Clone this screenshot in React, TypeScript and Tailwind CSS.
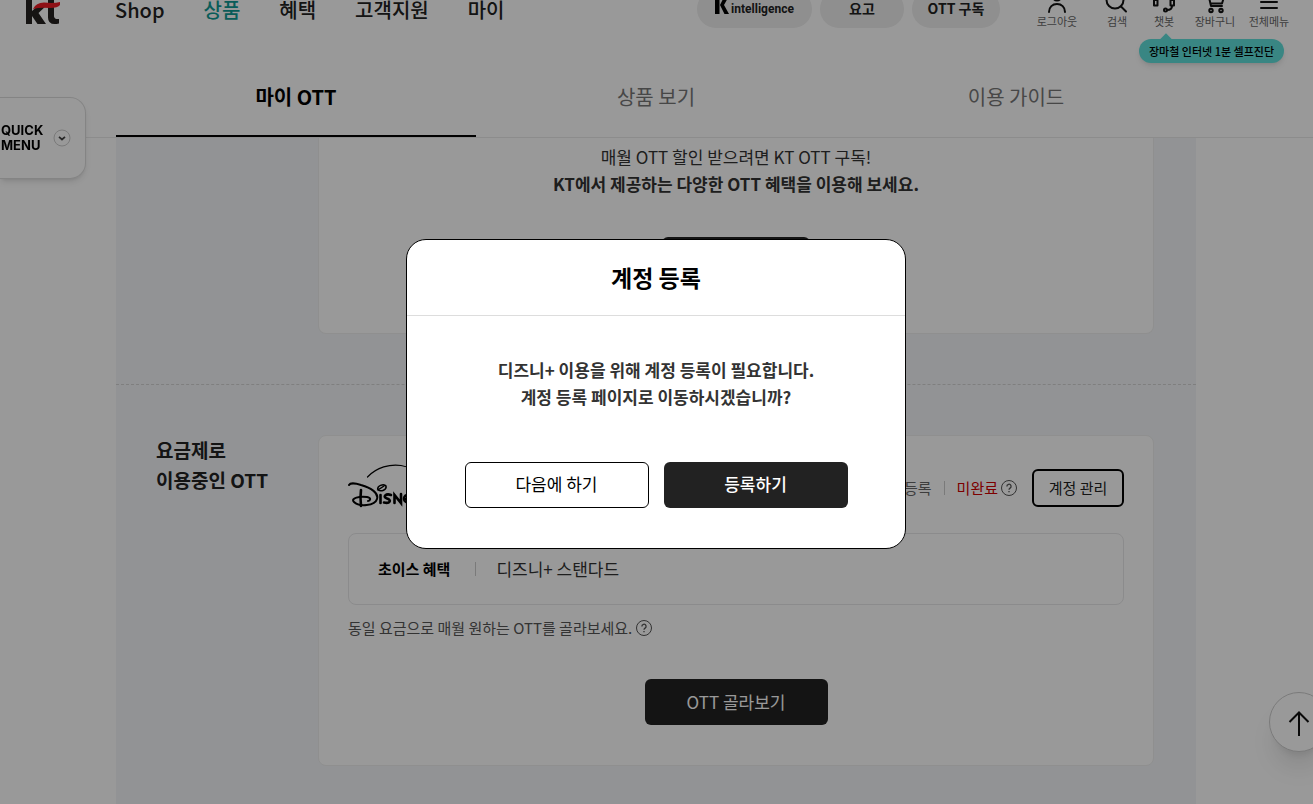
import type { ReactNode } from "react";

const navItems = ["Shop", "상품", "혜택", "고객지원", "마이"];
const tabs = ["마이 OTT", "상품 보기", "이용 가이드"];

function KtLogo() {
  return (
    <svg viewBox="0 0 36 40" className="h-10 w-9" role="img" aria-label="kt">
      <g fill="#252220">
        <path d="M0 4H6V26L14 19H22L12.500 28L20 39H11.500L6 31V39H0Z" />
        <path d="M22 15H28V31.500Q28.500 34.500 33 34V38.500Q22 41 22 32.500Z" />
      </g>
      <path d="M7 24Q10 17.500 18 17.500Q28 18.500 34 17V20Q32 23 24 23Q14 22 7 24Z" fill="#ee1c25" />
    </svg>
  );
}

function UtilIcon({ children }: { children: ReactNode }) {
  return (
    <svg
      viewBox="0 0 24 24"
      className="size-6"
      fill="none"
      stroke="#111"
      strokeWidth="2"
      strokeLinecap="round"
      strokeLinejoin="round"
      aria-hidden="true"
    >
      {children}
    </svg>
  );
}

function HelpIcon() {
  return (
    <svg viewBox="0 0 16 16" className="size-4" fill="none" stroke="#555" aria-hidden="true">
      <circle cx="8" cy="8" r="7.500" />
      <path d="M5.900 6.500a2.100 2.100 0 1 1 3.200 1.600c-.8.500-1.100.8-1.100 1.600M8 11v1.200" strokeWidth="1.300" />
    </svg>
  );
}

function DisneyLogo() {
  return (
    <svg viewBox="0 0 90 48" className="h-12 w-[90px]" fill="none" stroke="#000" strokeLinecap="round" role="img" aria-label="Disney+">
      <path d="M19.500 13C29 3 42 0 53 1.500S70 8 75 16" strokeWidth="1.200" />
      <path d="M1 21C2 19 7 19 13 21C23 24 31 29 29 35C27 42 11 43 6 38C2 34 12 32 19 33C24 34 22 37 20 37" strokeWidth="2" />
      <path d="M13 26Q12 33 13 42" strokeWidth="2.600" />
      <path d="M30 26C28 22 36 19 38 22C39 26 33 28 30 26L36 22" strokeWidth="1.500" />
      <path d="M32.500 31V39" strokeWidth="2.600" />
      <path d="M43 31C38 29 34 33 39 34.500S42 40 36 38.500" strokeWidth="2.600" />
      <path d="M46.500 39V31L53 39V30" strokeWidth="2.600" />
      <path d="M57 35C62 35 63 30 59 31C54 32 55 40 62 38" strokeWidth="2.400" />
      <path d="M67 31Q68 38 72 35M74 30Q74 44 66 45" strokeWidth="2.200" />
    </svg>
  );
}

const utilities: { label: string; width: string; icon: ReactNode }[] = [
  {
    label: "로그아웃",
    width: "w-18",
    icon: (
      <>
        <circle cx="12" cy="6" r="4.500" />
        <path d="M4 22c0-5 3.500-8 8-8s8 3 8 8" />
      </>
    ),
  },
  {
    label: "검색",
    width: "w-12",
    icon: (
      <>
        <circle cx="10" cy="10" r="8.500" />
        <path d="m16 16.500 5 5" />
      </>
    ),
  },
  {
    label: "챗봇",
    width: "w-[46px]",
    icon: (
      <>
        <path d="M2 11a10 10 0 0 1 20 0M2 10v5.500h3.500V10zM18.500 10v5.500H22V10zM20 16q0 4-5 4" />
        <circle cx="13.500" cy="20" r="1.500" />
      </>
    ),
  },
  {
    label: "장바구니",
    width: "w-14",
    icon: (
      <>
        <path d="M2 3h3l3 13h11M6 7h15l-2 6.500H7.500" />
        <circle cx="8" cy="20.500" r="1.700" />
        <circle cx="18" cy="20.500" r="1.700" />
      </>
    ),
  },
  { label: "전체메뉴", width: "w-13", icon: <path d="M4 5.500h16M4 12h16M4 18h16" /> },
];

function Header() {
  return (
    <header className="-mt-5 h-[78px] bg-white">
      <div className="flex h-[58px] items-center pr-[18px] pl-[26px]">
        <a href="#home" className="-mt-2 shrink-0">
          <KtLogo />
        </a>
        <nav className="ml-[53px] flex flex-1 gap-[39px] pt-0.5 text-xl leading-[18px] font-medium whitespace-nowrap text-[#222]">
          {navItems.map((item) => (
            <a key={item} href={`#${item}`} className={item === "상품" ? "text-[#109a94]" : ""}>
              {item}
            </a>
          ))}
        </nav>
        <div className="flex gap-2 text-sm leading-4 font-bold whitespace-nowrap text-[#222]">
          <a href="#k" className="flex h-[38px] w-[115px] items-center justify-center gap-0.5 rounded-full bg-[#eee]">
            <svg viewBox="0 0 14 20" className="mb-2 h-5 w-3.5" aria-hidden="true">
              <path d="M0 1H4.500V19H0ZM5 10L9.500 1H14L9 10L14 19H9.500Z" fill="#000" />
            </svg>
            <span className="font-[Roboto] text-xs">intelligence</span>
          </a>
          <a href="#yogo" className="flex h-[38px] w-[84px] items-center justify-center rounded-full bg-[#eee] pb-0.5">
            요고
          </a>
          <a href="#ott" className="flex h-[38px] w-[88px] items-center justify-center rounded-full bg-[#eee] pb-0.5">
            OTT 구독
          </a>
        </div>
        <div className="ml-[21px] flex text-[11px] leading-[14px] whitespace-nowrap text-[#666]">
          {utilities.map(({ label, width, icon }) => (
            <button key={label} className={`relative flex flex-col items-center ${width}`}>
              <UtilIcon>{icon}</UtilIcon>
              {label}
              {label === "챗봇" && (
                <span className="absolute top-full -left-0.5 mt-[11px] flex h-6 w-[145px] items-center justify-center rounded-full bg-[#5fe0db] pb-px font-medium text-black shadow-md">
                  <span className="absolute -top-1 left-[23px] size-2 rotate-45 bg-[#5fe0db]" />
                  <span className="relative">장마철 인터넷 1분 셀프진단</span>
                </span>
              )}
            </button>
          ))}
        </div>
      </div>
    </header>
  );
}

function QuickMenu() {
  return (
    <button className="fixed top-[97px] left-0 flex h-[82px] w-[86px] items-center gap-2.5 rounded-r-2xl border border-l-0 border-[#ddd] bg-white pl-px text-left font-[Inter] text-[13px] leading-[15px] font-bold text-black shadow-md">
      <span>
        QUICK
        <br />
        MENU
      </span>
      <svg viewBox="0 0 18 18" className="size-[18px]" fill="none" aria-hidden="true">
        <circle cx="9" cy="9" r="8" stroke="#ccc" />
        <path d="m6 7.800 3 2.700 3-2.700" stroke="#444" strokeWidth="1.700" />
      </svg>
    </button>
  );
}

function AccountDialog() {
  return (
    <div className="fixed inset-0 flex items-center justify-center bg-black/40 pr-px pb-[17px]">
      <div
        role="dialog"
        aria-modal="true"
        aria-labelledby="dialog-title"
        className="w-[500px] rounded-[20px] border border-black bg-white text-center"
      >
        <h2 id="dialog-title" className="border-b border-[#ddd] py-5 text-[23px] leading-[35px] font-bold text-black">
          계정 등록
        </h2>
        <p className="pt-10 text-[17px] leading-[27px] font-bold text-[#333]">
          디즈니+ 이용을 위해 계정 등록이 필요합니다.
          <br />
          계정 등록 페이지로 이동하시겠습니까?
        </p>
        <div className="flex justify-center gap-[15px] pt-[52px] pb-10 text-[17px]">
          <button className="h-[46px] w-[184px] rounded-md border border-black bg-white pb-0.5 text-black">
            다음에 하기
          </button>
          <button className="h-[46px] w-[184px] rounded-md bg-[#222] pb-0.5 font-medium text-white">등록하기</button>
        </div>
      </div>
    </div>
  );
}

export default function App() {
  return (
    <div className="flex min-h-screen flex-col overflow-hidden bg-white font-['Noto_Sans_CJK_KR',sans-serif]">
      <Header />
      <div className="border-b border-[#eaeaea] pr-px">
        <div role="tablist" className="mx-auto grid w-[1080px] grid-cols-3 text-xl">
          {tabs.map((tab, i) => (
            <button
              key={tab}
              role="tab"
              aria-selected={i === 0}
              className={
                i === 0
                  ? "h-[79px] border-b-2 border-black pt-px font-bold text-black"
                  : "h-[79px] border-b-2 border-transparent pt-px text-[#777]"
              }
            >
              {tab}
            </button>
          ))}
        </div>
      </div>

      <div className="flex flex-1 justify-center pr-px">
        <main className="w-[1080px] bg-[#f3f6f9] pb-[38px]">
          <section className="border-b border-dashed border-[#d4d4d4] pr-[42px] pb-[50px] pl-[202px]">
            <div className="flex h-[196px] flex-col items-center rounded-b-lg border border-t-0 border-[#eee] bg-white pt-[5px] text-center text-[17px] leading-[27px] text-[#333]">
              <p>매월 OTT 할인 받으려면 KT OTT 구독!</p>
              <p className="font-bold">KT에서 제공하는 다양한 OTT 혜택을 이용해 보세요.</p>
              <button className="mt-10 h-[46px] w-[148px] rounded-md bg-[#222] text-white">OTT 구독하기</button>
            </div>
          </section>

          <section className="flex pt-[50px] pr-[42px] pl-10">
            <h2 className="w-[162px] shrink-0 text-[19px] leading-[30px] font-bold text-[#222]">
              요금제로
              <br />
              이용중인 OTT
            </h2>
            <div className="flex-1 rounded-lg border border-[#eee] bg-white px-[29px] pt-[25px] pb-10">
              <div className="flex h-[54px] items-center text-[15px]">
                <DisneyLogo />
                <span className="ml-auto text-[#666]">계정등록</span>
                <span className="mx-3 h-3.5 w-px bg-[#ccc]" />
                <span className="mr-[3px] text-[#d00000]">미완료</span>
                <HelpIcon />
                <button className="ml-[15px] h-[38px] w-[92px] rounded-md border-2 border-black text-[#222]">
                  계정 관리
                </button>
              </div>
              <div className="mt-[18px] flex h-[72px] items-center rounded-lg border border-[#e8e8ea] px-[29px]">
                <strong className="text-[15px] font-bold text-black">초이스 혜택</strong>
                <span className="mr-5 ml-[25px] h-3.5 w-px bg-[#ccc]" />
                <span className="text-[17px] text-[#333]">디즈니+ 스탠다드</span>
              </div>
              <p className="flex items-center gap-1 pt-3 text-[15px] leading-[22px] text-[#555]">
                동일 요금으로 매월 원하는 OTT를 골라보세요.
                <HelpIcon />
              </p>
              <button className="mx-auto mt-10 block h-[46px] w-[183px] rounded-md bg-[#222] text-[17px] text-white">
                OTT 골라보기
              </button>
            </div>
          </section>
        </main>
      </div>

      <QuickMenu />
      <a
        href="#top"
        aria-label="맨 위로"
        className="fixed -right-4 bottom-[52px] flex size-[60px] items-center justify-center rounded-full border border-[#ccc] bg-white shadow-xl"
      >
        <svg viewBox="0 0 26 28" className="h-7 w-[26px]" fill="none" stroke="#111" strokeWidth="2" aria-hidden="true">
          <path d="M13 28V4.500M3.500 14 13 4.500l9.500 9.500" />
        </svg>
      </a>
      <AccountDialog />
    </div>
  );
}
